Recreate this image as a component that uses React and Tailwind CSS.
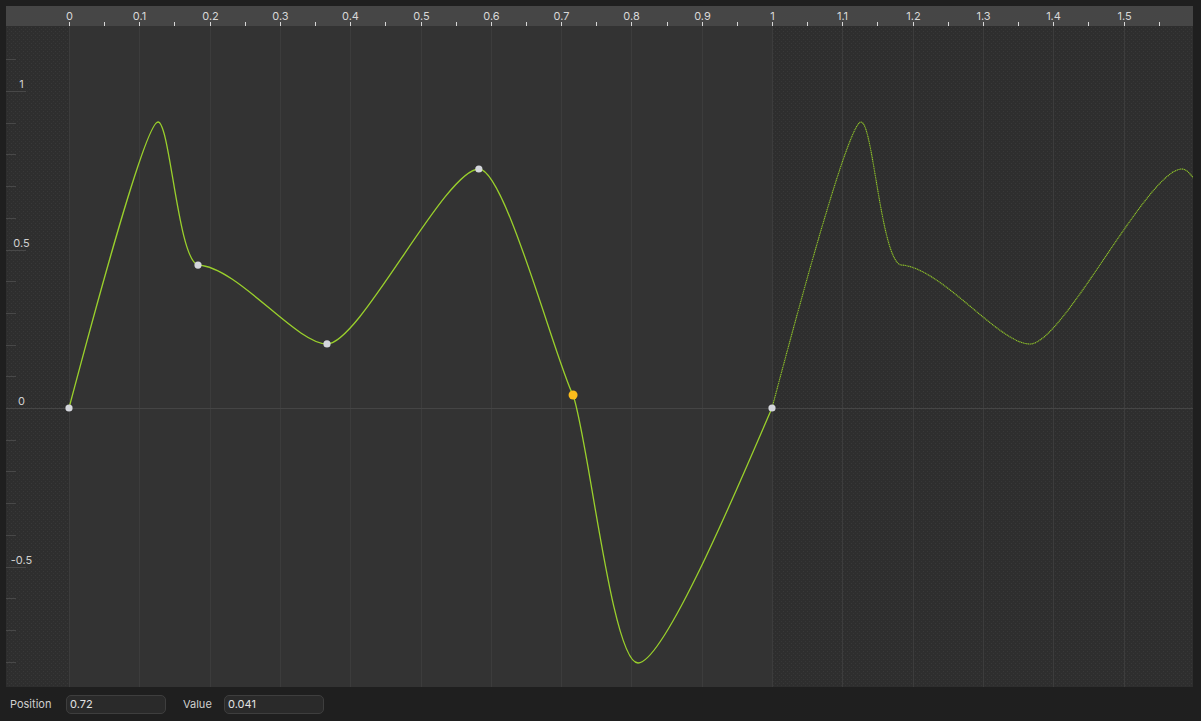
import React, { useState } from "react";

// chart geometry, in panel pixels
const WIDTH = 1187;
const RULER_H = 20;
const PLOT_H = 661;
const X0 = 63; // x of t = 0
const SX = 703; // px per unit of t
const Y0 = 382; // y of value = 0
const SY = 317; // px per unit of value

const px = (t) => X0 + t * SX;
const py = (v) => Y0 - v * SY;

const FONT = { fontFamily: "Inter, 'Noto Sans', sans-serif" };

// one period of the curve, drawn as cubic segments
const CURVE =
  "M63,382 C84,303 139,96 152,96 " +
  "C164,96 172,234 192,239 " +
  "C232,241 290,318 321,318 " +
  "C354,318 439,143 473,143 " +
  "C499,143 550,336 567,369 " +
  "C582,410 606,637 632,637 " +
  "C659,637 739,444 766,382";

const KEYS = [
  { t: 0, v: 0 },
  { t: 0.1835, v: 0.451 },
  { t: 0.367, v: 0.202 },
  { t: 0.583, v: 0.754 },
  { t: 0.717, v: 0.041, selected: true },
  { t: 1, v: 0 },
];

const fmt = (n) => String(Number(n.toFixed(2)));

function Ruler() {
  const ticks = [];
  for (let i = 0; i <= 31; i++) ticks.push(i / 20);
  return (
    <svg width={WIDTH} height={RULER_H} className="block">
      {ticks.map((t, i) => {
        const x = Math.round(px(t)) + 0.5;
        return (
          <g key={i}>
            <line x1={x} x2={x} y1={16} y2={20} stroke="#d6d6d6" />
            {i % 2 === 0 && (
              <text
                x={x}
                y={14}
                textAnchor="middle"
                fontSize="11"
                fill="#d8d8d8"
                style={FONT}
              >
                {fmt(t)}
              </text>
            )}
          </g>
        );
      })}
    </svg>
  );
}

function Plot() {
  const grid = [];
  for (let i = 1; i <= 15; i++) grid.push(i / 10);

  const vticks = [];
  for (let i = -8; i <= 11; i++) vticks.push(i);

  return (
    <svg width={WIDTH} height={PLOT_H} className="block">
      <defs>
        <pattern id="dots" width="4" height="4" patternUnits="userSpaceOnUse">
          <rect width="4" height="4" fill="#2e2e2e" />
          <rect x="1" y="1" width="1" height="1" fill="#383838" />
          <rect x="3" y="3" width="1" height="1" fill="#363636" />
        </pattern>
        <clipPath id="plotClip">
          <rect width={WIDTH} height={PLOT_H} />
        </clipPath>
      </defs>

      <rect width={WIDTH} height={PLOT_H} fill="#333333" />
      {/* outside of the 0..1 range */}
      <rect x={0} width={X0} height={PLOT_H} fill="url(#dots)" />
      <rect x={px(1)} width={WIDTH - px(1)} height={PLOT_H} fill="url(#dots)" />

      {/* vertical grid */}
      <line x1={X0 + 0.5} x2={X0 + 0.5} y1={0} y2={PLOT_H} stroke="#3c3c3c" />
      {grid.map((t) => {
        const x = Math.round(px(t)) + 0.5;
        return (
          <line key={t} x1={x} x2={x} y1={0} y2={PLOT_H} stroke="#3c3c3c" />
        );
      })}

      {/* zero line */}
      <line x1={0} x2={WIDTH} y1={Y0 + 0.5} y2={Y0 + 0.5} stroke="#454545" />

      {/* value ticks + labels */}
      {vticks.map((i) => {
        const y = Math.round(py(i / 10)) + 0.5;
        const major = i % 5 === 0;
        return (
          <g key={i}>
            <line
              x1={0}
              x2={major ? 20 : 10}
              y1={y}
              y2={y}
              stroke="#484848"
            />
            {major && (
              <text
                x={15.5}
                y={y - 4}
                textAnchor="middle"
                fontSize="11"
                fill="#d0d0d0"
                style={FONT}
              >
                {fmt(i / 10)}
              </text>
            )}
          </g>
        );
      })}

      <g clipPath="url(#plotClip)" fill="none">
        {/* repeated period past t = 1 */}
        <path
          d={CURVE}
          transform={`translate(${SX} 0)`}
          stroke="#92c82a"
          strokeWidth="1.1"
          strokeDasharray="1.2 0.6"
        />
        <path d={CURVE} stroke="#9ad02c" strokeWidth="1.3" />
      </g>

      {KEYS.map((k, i) => (
        <circle
          key={i}
          cx={px(k.t)}
          cy={py(k.v)}
          r={k.selected ? 4.5 : 3.6}
          fill={k.selected ? "#fbbc1b" : "#d4d6dc"}
        />
      ))}
    </svg>
  );
}

function Field({ label, labelWidth, value, onChange }) {
  return (
    <label className="flex items-center">
      <span className={`text-[11px] text-[#cfcfcf] ${labelWidth}`} style={FONT}>
        {label}
      </span>
      <input
        value={value}
        onChange={(e) => onChange(e.target.value)}
        className="h-[19px] w-[100px] rounded-[5px] border border-[#3e3e3e] bg-[#2a2a2a] px-[3px] text-[11px] text-[#e2e2e2] outline-none"
        style={FONT}
      />
    </label>
  );
}

export default function App() {
  const [position, setPosition] = useState("0.72");
  const [value, setValue] = useState("0.041");

  return (
    <div className="flex h-[721px] w-[1201px] flex-col bg-[#1f1f1f]">
      <div className="ml-[6px] mt-[6px] flex w-[1187px] flex-col">
        <div className="bg-[#464646]">
          <Ruler />
        </div>
        <Plot />
      </div>

      <div className="flex flex-1 items-center gap-[17px] pl-[10px]">
        <Field
          label="Position"
          labelWidth="w-[56px]"
          value={position}
          onChange={setPosition}
        />
        <Field
          label="Value"
          labelWidth="w-[41px]"
          value={value}
          onChange={setValue}
        />
      </div>
    </div>
  );
}
